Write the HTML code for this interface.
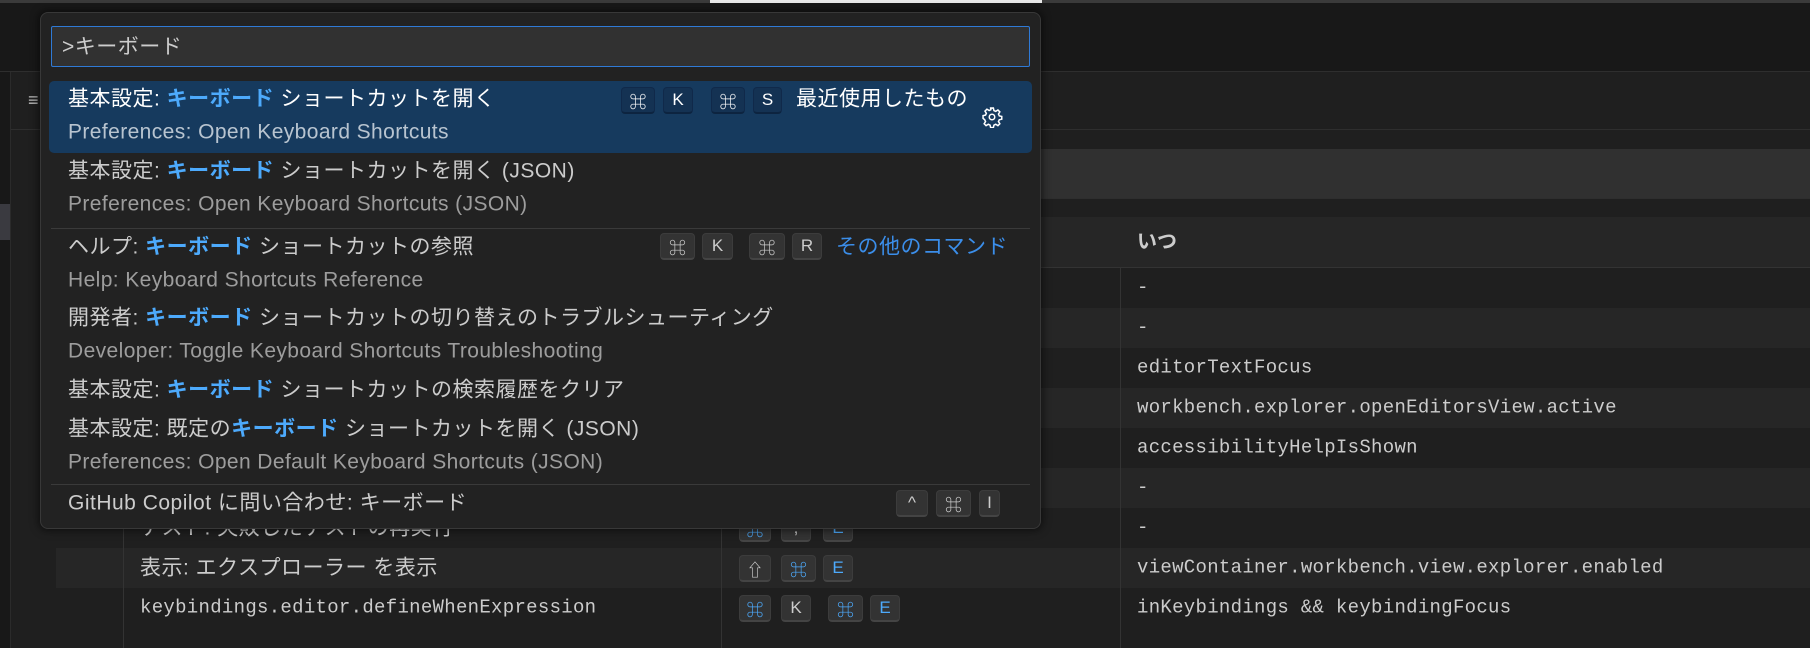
<!DOCTYPE html>
<html><head><meta charset="utf-8"><style>
*{margin:0;padding:0;box-sizing:border-box}
body{width:1810px;height:648px;background:#1f1f1f;position:relative;overflow:hidden;font-family:"Liberation Sans","Noto Sans CJK JP",sans-serif;color:#ccc}
.a{position:absolute}
.t{position:absolute;white-space:nowrap;line-height:1;transform:translateY(-50%)}
.jp{font-size:21px;color:#ccc;letter-spacing:.5px}
.ds{font-size:21px;color:#9d9d9d;letter-spacing:.4px}
.hl{color:#4daafc;font-weight:bold}
.mono{font-family:"Liberation Mono","Noto Sans CJK JP",monospace;font-size:19px;color:#ccc;letter-spacing:.3px}
.k{position:absolute;height:27px;border-radius:4px;background:#333;border:1px solid #3c3c3c;border-bottom:2px solid #444;color:#ccc;font-size:17px;display:flex;align-items:center;justify-content:center}
.ks{background:#143253;border-color:#10294a;border-bottom-color:#0d2440;color:#fff}
.b{color:#4daafc}
</style></head><body>
<div class="a" style="left:0;top:0;width:1810px;height:71px;background:#181818"></div>
<div class="a" style="left:0;top:0;width:1810px;height:3px;background:#3a3a3a"></div>
<div class="a" style="left:710px;top:0;width:332px;height:3px;background:#e8e8e8"></div>
<div class="a" style="left:0;top:71px;width:1810px;height:1px;background:#2e2e2e"></div>
<div class="a" style="left:0;top:72px;width:10px;height:576px;background:#181818"></div>
<div class="a" style="left:10px;top:72px;width:1px;height:576px;background:#2b2b2b"></div>
<div class="a" style="left:0;top:204px;width:10px;height:36px;background:#3a3a40"></div>
<div class="a" style="left:11px;top:129px;width:1799px;height:1px;background:#2e2e2e"></div>
<div class="t" style="left:28px;top:100px;font-size:18px;color:#bbb">≡</div>
<div class="a" style="left:40px;top:149px;width:1770px;height:49px;background:#303030"></div>
<div class="a" style="left:40px;top:198px;width:1770px;height:1px;background:#2e2e2e"></div>
<div class="a" style="left:40px;top:217px;width:1770px;height:50px;background:#262626"></div>
<div class="a" style="left:40px;top:267px;width:1770px;height:1px;background:#333"></div>
<div class="t" style="left:1137px;top:242px;font-size:20px;font-weight:bold;color:#ccc">いつ</div>
<div class="a" style="left:56px;top:308px;width:1754px;height:40px;background:#262626"></div>
<div class="a" style="left:56px;top:388px;width:1754px;height:40px;background:#262626"></div>
<div class="a" style="left:56px;top:468px;width:1754px;height:40px;background:#262626"></div>
<div class="a" style="left:56px;top:548px;width:1754px;height:40px;background:#262626"></div>
<div class="a" style="left:123px;top:267px;width:1px;height:381px;background:#333"></div>
<div class="a" style="left:721px;top:267px;width:1px;height:381px;background:#333"></div>
<div class="a" style="left:1120px;top:267px;width:1px;height:381px;background:#333"></div>
<div class="t mono" style="left:1137px;top:288px">-</div>
<div class="t mono" style="left:1137px;top:328px">-</div>
<div class="t mono" style="left:1137px;top:368px">editorTextFocus</div>
<div class="t mono" style="left:1137px;top:408px">workbench.explorer.openEditorsView.active</div>
<div class="t mono" style="left:1137px;top:448px">accessibilityHelpIsShown</div>
<div class="t mono" style="left:1137px;top:488px">-</div>
<div class="t mono" style="left:1137px;top:528px">-</div>
<div class="t mono" style="left:1137px;top:568px">viewContainer.workbench.view.explorer.enabled</div>
<div class="t mono" style="left:1137px;top:608px">inKeybindings &amp;&amp; keybindingFocus</div>
<div class="t jp" style="left:140px;top:528px">テスト: 失敗したテストの再実行</div>
<div class="k b" style="left:739px;top:515px;width:32px">⌘</div>
<div class="k" style="left:781px;top:515px;width:30px">;</div>
<div class="k b" style="left:823px;top:515px;width:30px">E</div>
<div class="t jp" style="left:140px;top:568px">表示: エクスプローラー を表示</div>
<div class="k" style="left:739px;top:555px;width:32px">⇧</div>
<div class="k b" style="left:781px;top:555px;width:35px">⌘</div>
<div class="k b" style="left:823px;top:555px;width:30px">E</div>
<div class="t mono" style="left:140px;top:608px">keybindings.editor.defineWhenExpression</div>
<div class="k b" style="left:739px;top:595px;width:32px">⌘</div>
<div class="k" style="left:781px;top:595px;width:30px">K</div>
<div class="k b" style="left:828px;top:595px;width:35px">⌘</div>
<div class="k b" style="left:870px;top:595px;width:30px">E</div>
<div class="a" style="left:40px;top:12px;width:1001px;height:517px;background:#222;border:1px solid #383838;border-radius:8px;box-shadow:0 0 8px 2px rgba(0,0,0,.5)"></div>
<div class="a" style="left:51px;top:26px;width:979px;height:41px;background:#313131;border:1px solid #2f7ad6;border-radius:2px"></div>
<div class="t jp" style="left:62px;top:47px;color:#ccc">&gt;キーボード</div>
<div class="a" style="left:49px;top:81px;width:983px;height:72px;background:#163a5e;border-radius:5px"></div>
<div class="t jp" style="left:68px;top:99px;color:#fff">基本設定: <span class="hl">キーボード</span> ショートカットを開く</div>
<div class="t ds" style="left:68px;top:132px;color:#b8c4d0">Preferences: Open Keyboard Shortcuts</div>
<div class="k ks" style="left:621px;top:87px;width:34px">⌘</div>
<div class="k ks" style="left:663px;top:87px;width:30px">K</div>
<div class="k ks" style="left:711px;top:87px;width:34px">⌘</div>
<div class="k ks" style="left:753px;top:87px;width:29px">S</div>
<div class="t jp" style="left:796px;top:99px;color:#fff">最近使用したもの</div>
<svg class="a" style="left:981px;top:106px" width="22" height="22" viewBox="0 0 16 16"><path fill="none" stroke="#fff" stroke-width="1.1" d="M7 1.5h2l.4 1.8 1.3.6 1.6-1 1.4 1.4-1 1.6.6 1.3 1.8.4v2l-1.8.4-.6 1.3 1 1.6-1.4 1.4-1.6-1-1.3.6-.4 1.8H7l-.4-1.8-1.3-.6-1.6 1-1.4-1.4 1-1.6-.6-1.3L1.5 9V7l1.8-.4.6-1.3-1-1.6 1.4-1.4 1.6 1 1.3-.6z"/><circle cx="8" cy="8" r="2" fill="none" stroke="#fff" stroke-width="1.1"/></svg>
<div class="t jp" style="left:68px;top:171px">基本設定: <span class="hl">キーボード</span> ショートカットを開く (JSON)</div>
<div class="t ds" style="left:68px;top:204px">Preferences: Open Keyboard Shortcuts (JSON)</div>
<div class="a" style="left:51px;top:228px;width:979px;height:1px;background:#3a3a3a"></div>
<div class="t jp" style="left:68px;top:247px">ヘルプ: <span class="hl">キーボード</span> ショートカットの参照</div>
<div class="t ds" style="left:68px;top:280px">Help: Keyboard Shortcuts Reference</div>
<div class="k" style="left:660px;top:233px;width:35px">⌘</div>
<div class="k" style="left:702px;top:233px;width:31px">K</div>
<div class="k" style="left:749px;top:233px;width:36px">⌘</div>
<div class="k" style="left:792px;top:233px;width:30px">R</div>
<div class="t jp" style="left:836px;top:247px;color:#3b8eea">その他のコマンド</div>
<div class="t jp" style="left:68px;top:318px">開発者: <span class="hl">キーボード</span> ショートカットの切り替えのトラブルシューティング</div>
<div class="t ds" style="left:68px;top:351px">Developer: Toggle Keyboard Shortcuts Troubleshooting</div>
<div class="t jp" style="left:68px;top:390px">基本設定: <span class="hl">キーボード</span> ショートカットの検索履歴をクリア</div>
<div class="t jp" style="left:68px;top:429px">基本設定: 既定の<span class="hl">キーボード</span> ショートカットを開く (JSON)</div>
<div class="t ds" style="left:68px;top:462px">Preferences: Open Default Keyboard Shortcuts (JSON)</div>
<div class="a" style="left:51px;top:484px;width:979px;height:1px;background:#3a3a3a"></div>
<div class="t jp" style="left:68px;top:503px">GitHub Copilot に問い合わせ: キーボード</div>
<div class="k" style="left:896px;top:490px;width:32px">^</div>
<div class="k" style="left:936px;top:490px;width:35px">⌘</div>
<div class="k" style="left:979px;top:490px;width:21px">I</div>
</body></html>
